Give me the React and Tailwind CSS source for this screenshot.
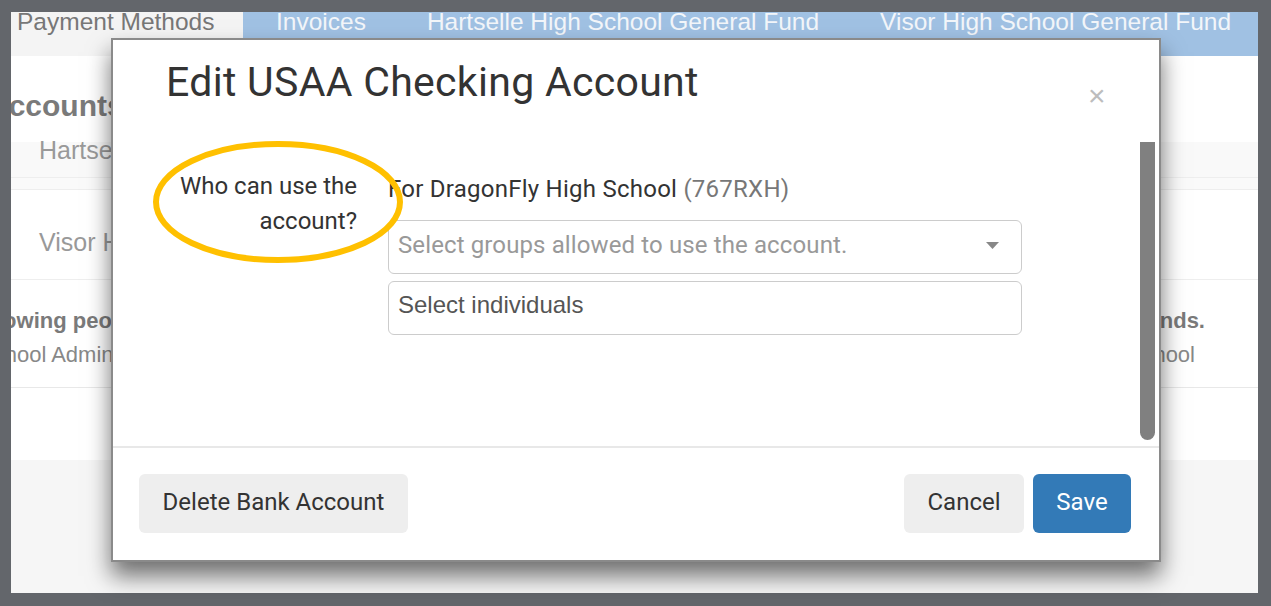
import { useState } from "react";

const din = { fontFamily: "Roboto, 'Noto Sans', sans-serif" };
const helv = { fontFamily: "'Liberation Sans', Arial, sans-serif" };

// page behind the dialog, mostly hidden
const BackgroundPage = () => (
  <div className="h-full w-full flex flex-col bg-white overflow-hidden" style={helv}>
    <div className="flex h-[44px] shrink-0 bg-[#a0c1e3] text-[24.5px] leading-[20px]">
      <div className="w-[232px] shrink-0 bg-[#f4f4f4] text-[#777] pl-[6px] whitespace-nowrap">Payment Methods</div>
      <div className="flex text-[#f3f6fa] whitespace-nowrap">
        <span className="pl-[33px]">Invoices</span>
        <span className="pl-[61px]">Hartselle High School General Fund</span>
        <span className="pl-[61px]">Visor High School General Fund</span>
      </div>
    </div>
    <div className="pt-[33px] h-[86px] shrink-0">
      <div className="text-[30px] font-bold text-[#7a7a7a] ml-[-24px] leading-[34px]">Accounts</div>
    </div>
    <div className="h-[36px] bg-[#f9f9f9] border-b border-[#eee] text-[25px] text-[#999] pl-[28px] leading-[16px] shrink-0 whitespace-nowrap">
      Hartselle High School General Fund
    </div>
    <div className="h-[12px] bg-[#fafafa] border-b border-[#eee] shrink-0" />
    <div className="h-[90px] border-b border-[#eee] text-[25px] text-[#999] pl-[28px] pt-[34px] shrink-0 whitespace-nowrap">
      Visor High School General Fund
    </div>
    <div className="h-[108px] border-b border-[#e8e8e8] flex justify-between text-[22px] text-[#888] pt-[30px] shrink-0 whitespace-nowrap">
      <div>
        <div className="font-bold leading-[22px] text-[#7a7a7a] ml-[-47px]">Following people can use these funds.</div>
        <div className="leading-[22px] mt-[12px] ml-[-32px]">School Administrators</div>
      </div>
      <div className="text-right">
        <div className="font-bold leading-[22px] text-[#7a7a7a] mr-[53px]">people can use these funds.</div>
        <div className="leading-[22px] mt-[12px] mr-[63px]">Visor High School</div>
      </div>
    </div>
    <div className="h-[72px] shrink-0" />
    <div className="flex-1 bg-[#f6f6f6]" />
  </div>
);

const Caret = () => (
  <svg width="13" height="7" viewBox="0 0 13 7" className="shrink-0">
    <path d="M0 0 H13 L6.5 7 Z" fill="#888" />
  </svg>
);

const EditAccountDialog = () => {
  const [groups] = useState("");
  return (
    <div className="absolute left-[111px] top-[38px] w-[1050px] h-[524px] bg-white border-2 border-[#8a8a8a] shadow-[0_14px_22px_rgba(0,0,0,0.55)] flex flex-col" style={din}>
      <div className="relative h-[102px] shrink-0 pl-[53px] pt-[18px]">
        <h2 className="text-[41px] leading-[48px] text-[#333] tracking-[0.3px] whitespace-nowrap">Edit USAA Checking Account</h2>
        <span className="absolute left-[975px] top-[36px] text-[30px] leading-[40px] text-[#bdbdbd]" style={helv}>×</span>
      </div>

      <div className="flex h-[304px] shrink-0">
        <div className="flex-1 flex pt-[27px]">
          <div className="w-[244px] text-right text-[24px] leading-[35px] text-[#333]">
            Who can use the<br />account?
          </div>
          <div className="ml-[31px] w-[634px] flex flex-col">
            <div className="text-[24px] leading-[35px] text-[#333] mt-[3px] tracking-[0.25px] whitespace-nowrap">
              For DragonFly High School <span className="text-[#777]">(767RXH)</span>
            </div>
            <div className="mt-[13px] h-[54px] border border-[#ccc] rounded-[6px] flex items-center pl-[9px] pr-[22px] pb-[4px]">
              <span className="flex-1 text-[24px] text-[#999] tracking-[0.12px] whitespace-nowrap">
                {groups || "Select groups allowed to use the account."}
              </span>
              <Caret />
            </div>
            <div className="mt-[7px] h-[54px] border border-[#ccc] rounded-[6px] flex items-center pl-[9px] pb-[7px] text-[24px] text-[#555]" style={helv}>
              Select individuals
            </div>
          </div>
        </div>
        <div className="w-[15px] mr-[4px] h-[298px] bg-[#808080] rounded-b-[8px]" />
      </div>

      <div className="flex-1 border-t-2 border-[#e8e8e8] flex items-start pt-[26px] pl-[26px] pr-[28px] text-[24px]">
        <button className="h-[59px] w-[269px] rounded-[6px] bg-[#eeeeee] text-[#333] pb-[4px]">Delete Bank Account</button>
        <div className="flex-1" />
        <button className="h-[59px] w-[120px] rounded-[6px] bg-[#eeeeee] text-[#333] pb-[4px]">Cancel</button>
        <button className="ml-[9px] h-[59px] w-[98px] rounded-[6px] bg-[#337ab7] text-white pb-[4px]">Save</button>
      </div>
    </div>
  );
};

export default function App() {
  return (
    <div className="w-[1271px] h-[606px] bg-[#63666b] pt-[12px] pl-[11px] pr-[13px] pb-[13px]">
      <div className="relative w-full h-full">
        <BackgroundPage />
      </div>
      <div className="absolute inset-0 pointer-events-none">
        <EditAccountDialog />
        <svg className="absolute left-[150px] top-[138px]" width="260" height="130" viewBox="0 0 260 130">
          <ellipse cx="128" cy="64" rx="122" ry="58" fill="none" stroke="#ffc000" strokeWidth="6" />
        </svg>
      </div>
    </div>
  );
}
